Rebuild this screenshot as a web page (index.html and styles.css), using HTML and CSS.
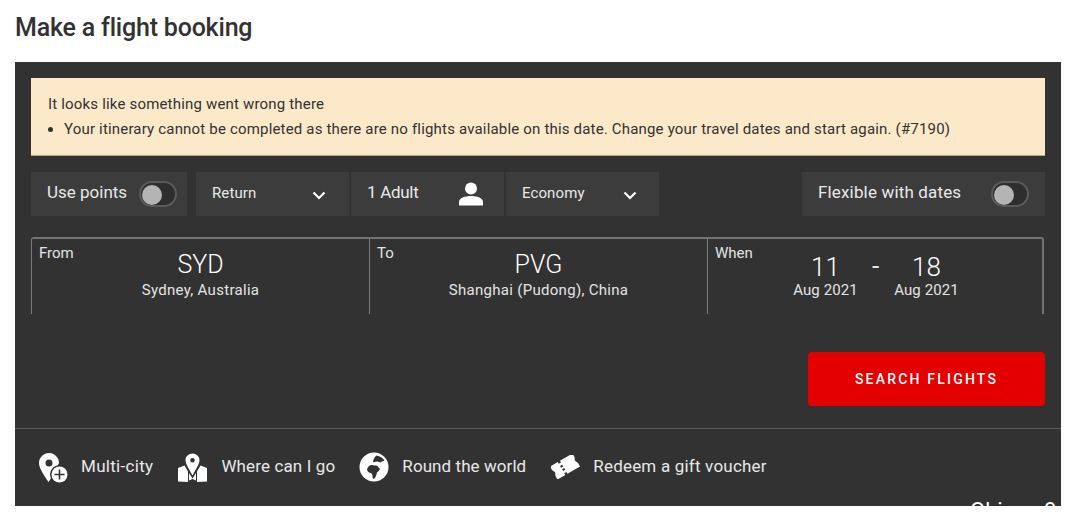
FILE: index.html
```html
<!DOCTYPE html>
<html lang="en">
<head>
<meta charset="utf-8">
<title>Make a flight booking</title>
<link rel="stylesheet" href="styles.css">
</head>
<body>
<h1 class="title">Make a flight booking</h1>
<section class="panel">
  <div class="alert">
    <p class="alert-head">It looks like something went wrong there</p>
    <ul class="alert-list"><li>Your itinerary cannot be completed as there are no flights available on this date. Change your travel dates and start again. (#7190)</li></ul>
  </div>
  <div class="options">
    <div class="seg seg-points"><span class="seg-label">Use points</span><span class="toggle"><span class="knob"></span></span></div>
    <div class="seg seg-return"><span class="seg-small">Return</span>
      <svg class="chev" viewBox="0 0 14 9"><path d="M1.500 1.500 7 7l5.500-5.500" fill="none" stroke="#fff" stroke-width="2.200"/></svg></div>
    <div class="seg seg-adult"><span class="seg-label">1 Adult</span>
      <svg class="person" viewBox="0 0 24 24"><circle cx="12" cy="6.500" r="6" fill="#fff"/><path d="M0 23.500v-3.500c0-4 6-6 12-6s12 2 12 6v3.500z" fill="#fff"/></svg></div>
    <div class="seg seg-class"><span class="seg-small">Economy</span>
      <svg class="chev" viewBox="0 0 14 9"><path d="M1.500 1.500 7 7l5.500-5.500" fill="none" stroke="#fff" stroke-width="2.200"/></svg></div>
    <div class="seg seg-flex"><span class="seg-label">Flexible with dates</span><span class="toggle"><span class="knob"></span></span></div>
  </div>
  <div class="fields">
    <div class="field">
      <span class="field-label">From</span>
      <div class="place"><span class="code">SYD</span><span class="city">Sydney, Australia</span></div>
    </div>
    <div class="field">
      <span class="field-label">To</span>
      <div class="place"><span class="code">PVG</span><span class="city">Shanghai (Pudong), China</span></div>
    </div>
    <div class="field">
      <span class="field-label">When</span>
      <div class="dates">
        <div class="date"><span class="day">11</span><span class="month">Aug 2021</span></div>
        <span class="dash">-</span>
        <div class="date"><span class="day">18</span><span class="month">Aug 2021</span></div>
      </div>
    </div>
  </div>
  <div class="actions"><button class="search">SEARCH FLIGHTS</button></div>
  <div class="links">
    <a class="link link-multi">
      <svg class="icon" viewBox="0 0 30 32"><path fill-rule="evenodd" d="M11 2C5.500 2 1 6.500 1 12c0 5.500 5.500 13 9.500 19l3-4.500 7-13.500c0-.4.500-.700.500-1C21 6.500 16.500 2 11 2zm0 6.500a3.500 3.500 0 1 1 0 7 3.500 3.500 0 0 1 0-7z" fill="#fff"/><circle cx="21.500" cy="23.500" r="9.500" fill="#323232"/><circle cx="21.500" cy="23.500" r="8" fill="#fff"/><path d="M21.500 18.500v10M16.500 23.500h10" stroke="#323232" stroke-width="1.600"/></svg>
      <span>Multi-city</span></a>
    <a class="link link-where">
      <svg class="icon" viewBox="0 0 30 32"><path fill-rule="evenodd" d="M14.500 2.500c-3.900 0-7 3-7 6.700 0 3.600 3.600 8.800 7 15.300 3.400-6.500 7-11.700 7-15.300 0-3.700-3.100-6.700-7-6.700zm0 4.400a2.300 2.300 0 1 1 0 4.600 2.300 2.300 0 0 1 0-4.600z" fill="#fff"/><path d="M0 17l6.500-2.500 3.500 6V31l-10-.500zM11 22l3.500 5.500 3.500-5.500v7.500l-3.500-1.500-3.500 1.500zM19 20.500l3.500-6L29 17v13.500L19 31z" fill="#fff"/></svg>
      <span>Where can I go</span></a>
    <a class="link link-round">
      <svg class="icon" viewBox="0 0 30 32"><circle cx="15" cy="16" r="14.500" fill="#fff"/><path d="M8 18.500c.5-2.500 2.500-4.500 5-4.500 1 0 1.500.5 2.500.5s2-.5 3 .5c.5 1 1.500 2 2.500 3-.5 1.500-2 2.500-3 3.500-.5 2-1 4.500-3 6.500-1 0-1.500-1-1.500-2.500 0-1.500-.5-3-1.500-3.500-2 0-3.500-1.500-4-3.500z" fill="#323232"/><path d="M14 11c0-2.500 1.500-5 3.500-6.500 3.500.5 6.500 2.500 8 5-1 1-3 .5-4 2-1-.5-2-.5-3-1-1.500 0-3 1-4.500.5z" fill="#323232"/></svg>
      <span>Round the world</span></a>
    <a class="link link-gift">
      <svg class="icon icon-gift" viewBox="0 0 30 24"><g transform="rotate(-30 14 11.500)"><path d="M1 4h9v2h2.500V4H27v4l-1.500 3.500L27 15v4H12.500v-2H10v2H1v-4l1.500-3.500L1 8z" fill="#fff"/><path d="M10 8.500h2.500v2H10zM10 12.500h2.500v2H10z" fill="#323232"/></g></svg>
      <span>Redeem a gift voucher</span></a>
  </div>
  <div class="overflow-text">Ohinna 9</div>
</section>
</body>
</html>
```
FILE: styles.css
```css
* { box-sizing: border-box; }
html, body { margin: 0; padding: 0; height: 523px; overflow: hidden; background: #fff; }
body { font-family: Roboto, "Liberation Sans", sans-serif; color: #fff; }
.title { margin: 0; padding: 13px 15px 0; height: 62px; font-size: 25px; line-height: 30px; font-weight: 500; letter-spacing: -.2px; color: #323232; }
.panel { position: relative; margin-left: 15px; width: 1046px; height: 444px; padding: 16px; background: #323232; overflow: hidden; }
.alert { height: 78px; padding: 14px 17px 0; background: #fce9ca; border-bottom: 1px solid #b5a68c; color: #323232; font-size: 15px; line-height: 25px; letter-spacing: .18px; }
.alert-head { margin: 0; }
.alert-list { margin: 0; padding: 0 0 0 16px; }
.options { display: flex; margin-top: 16px; height: 44px; }
.seg { display: flex; align-items: center; height: 44px; background: #3c3c3c; }
.seg-label { font-size: 17px; color: #e8e8e8; }
.seg-small { font-size: 15px; color: #e8e8e8; letter-spacing: .1px; }
.seg-points { width: 156px; padding-left: 16px; padding-right: 10px; justify-content: space-between; margin-right: 9px; }
.seg-points .seg-label, .seg-flex .seg-label { margin-top: -5px; }
.seg-return { width: 153px; padding-left: 16px; padding-right: 23px; justify-content: space-between; margin-right: 2px; }
.seg-return .seg-small, .seg-class .seg-small { margin-top: -2px; }
.seg-return .chev, .seg-class .chev { margin-top: 2px; }
.seg-adult { width: 153px; padding-left: 16px; padding-right: 21px; justify-content: space-between; margin-right: 2px; }
.seg-adult .seg-label { margin-top: -5px; letter-spacing: -.3px; }
.seg-class { width: 153px; padding-left: 16px; padding-right: 22px; justify-content: space-between; }
.seg-flex { width: 243px; margin-left: auto; padding: 0 16px; justify-content: space-between; }
.seg-flex .seg-label { letter-spacing: .16px; }
.toggle { display: block; width: 38px; height: 26px; padding: 3px; border: 2px solid #5a5a5a; border-radius: 13px; background: #2e2e2e; }
.knob { display: block; width: 20px; height: 20px; margin: -1px 0 0 -2px; border-radius: 50%; background: #b4b4b4; }
.chev { width: 14px; height: 9px; }
.person { width: 24px; height: 24px; }
.fields { display: flex; width: 1013px; margin-top: 21px; height: 77px; border-top: 2px solid #737373; border-radius: 3px 3px 0 0; }
.field { position: relative; flex: 1; border-left: 1px solid #7c7c7c; padding-top: 2px; }
.field:last-child { border-right: 2px solid #737373; flex: 0 0 337px; }
.field-label { position: absolute; left: 7px; top: 4px; font-size: 15px; line-height: 20px; color: #e4e4e4; }
.place { display: flex; flex-direction: column; align-items: center; }
.code { font-size: 25px; line-height: 40px; margin-top: 4px; font-weight: 300; }
.city { font-size: 15px; line-height: 20px; margin-top: -5px; letter-spacing: .3px; color: #e4e4e4; }
.dates { display: flex; justify-content: center; align-items: flex-start; padding: 8px 0 0 0; gap: 0; }
.date { display: flex; flex-direction: column; align-items: center; width: 66px; }
.date:first-child { margin-left: 2px; margin-right: -1px; }
.day { font-size: 26px; line-height: 36px; font-weight: 300; }
.month { font-size: 15px; line-height: 20px; margin-top: -5px; letter-spacing: .1px; color: #e4e4e4; }
.dash { width: 36px; text-align: center; font-size: 26px; line-height: 34px; color: #e4e4e4; }
.actions { display: flex; justify-content: flex-end; margin-top: 38px; }
.search { width: 237px; height: 54px; border: 0; border-radius: 4px; background: #e40000; color: #fff; font: 500 14px Roboto, sans-serif; letter-spacing: 2.200px; }
.links { display: flex; align-items: center; margin: 22px -16px 0; padding: 0 0 0 23px; height: 76px; border-top: 1px solid #5f5f5f; }
.link { display: flex; align-items: center; font-size: 17px; color: #e8e8e8; }
.link span { margin-top: -2px; }
.link-multi { letter-spacing: .3px; margin-right: 25px; }
.link-where { letter-spacing: .13px; margin-right: 24px; }
.link-round { letter-spacing: .07px; margin-right: 25px; }
.link-gift { letter-spacing: .2px; }
.icon { width: 30px; height: 32px; margin-right: 13px; }
.icon-gift { height: 24px; margin-right: 12px; }
.overflow-text { position: absolute; left: 955px; top: 436px; font-size: 22px; line-height: 26px; color: #fff; }
```
